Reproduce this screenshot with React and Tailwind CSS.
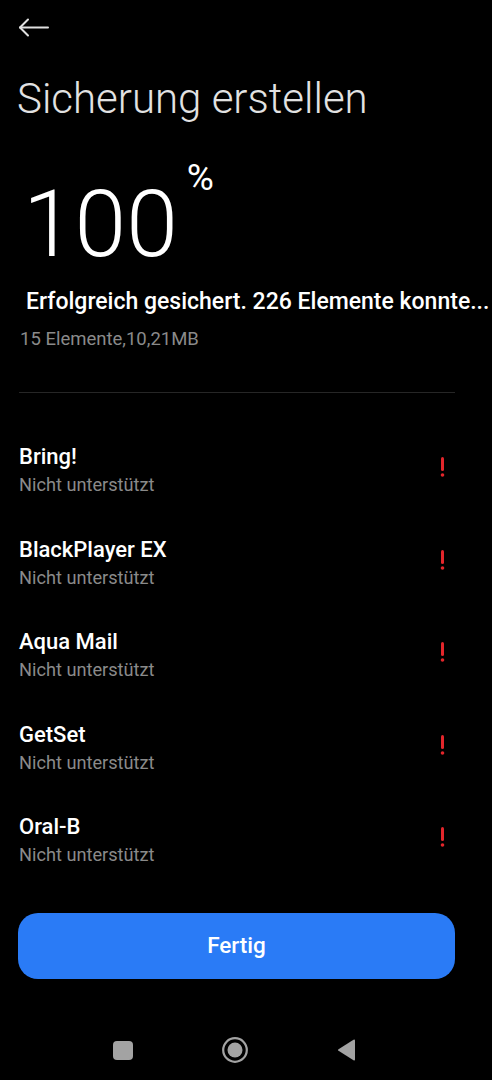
import React from 'react';

const apps = ['Bring!', 'BlackPlayer EX', 'Aqua Mail', 'GetSet', 'Oral-B'];

function Warn() {
    return (
        <svg width="5" height="22" viewBox="0 0 5 22" className="mr-[10px] mt-[13px] shrink-0">
            <rect x="1" y="1" width="3" height="14" rx="1.5" fill="#e3262b" />
            <circle cx="2.5" cy="19" r="1.8" fill="#e3262b" />
        </svg>
    );
}

export default function App() {
    return (
        <div className="w-[492px] h-[1080px] bg-black overflow-hidden font-['Roboto',sans-serif]">
            {/* back */}
            <div className="pt-[18px] pl-[18px]">
                <svg width="31" height="19" viewBox="0 0 31 19" fill="none" stroke="#e0e0e0" strokeWidth="2" strokeLinecap="round" strokeLinejoin="round">
                    <path d="M30 9.5H2" />
                    <path d="M10 1.5L2 9.5L10 17.5" />
                </svg>
            </div>

            <h1 className="mt-[41px] pl-[17px] text-[42px] leading-[42px] font-light text-[#e2e2e2]">
                Sicherung erstellen
            </h1>

            <div className="mt-[56px] pl-[23px] flex items-start text-white">
                <span className="text-[93px] leading-[98px] font-light">100</span>
                <span className="ml-[9px] mt-[-17px] text-[37px] leading-[38px] font-normal">%</span>
            </div>

            <p className="mt-[14px] pl-[26px] pr-[3px] text-[23px] leading-[28px] font-medium text-white whitespace-nowrap">
                Erfolgreich gesichert. 226 Elemente konnte...
            </p>
            <p className="mt-[11px] pl-[20px] text-[18.5px] leading-[24px] text-[#8a8a8a]">
                15 Elemente,10,21MB
            </p>

            <div className="mt-[41px] ml-[19px] w-[436px] h-px bg-[#262626]" />

            <div className="mt-[50px] flex flex-col gap-[38.5px] pl-[19px] pr-[37px]">
                {apps.map((name) => (
                    <div key={name} className="flex justify-between items-start">
                        <div>
                            <div className="text-[22px] leading-[28px] font-medium text-white">{name}</div>
                            <div className="mt-[2px] text-[18.2px] leading-[24px] text-[#8a8a8a]">Nicht unterstützt</div>
                        </div>
                        <Warn />
                    </div>
                ))}
            </div>

            <div className="mt-[46px] px-[18px] pr-[37px]">
                <button className="w-full h-[66px] rounded-[20px] bg-[#2a7bf6] text-white text-[22.5px] font-medium">
                    Fertig
                </button>
            </div>

            {/* nav bar */}
            <div className="mt-[58px] pl-[113px] flex items-center gap-[89px]">
                <div className="w-[20px] h-[19px] rounded-[4px] bg-[#a3a3a3]" />
                <svg width="26" height="26" viewBox="0 0 26 26">
                    <circle cx="13" cy="13" r="11.8" fill="none" stroke="#a3a3a3" strokeWidth="2.2" />
                    <circle cx="13" cy="13" r="7.5" fill="#a3a3a3" />
                </svg>
                <svg width="19" height="22" viewBox="0 0 19 22">
                    <path d="M18 1.5V20.5a1 1 0 0 1-1.5.8L1.5 11.8a1 1 0 0 1 0-1.6L16.5 .7A1 1 0 0 1 18 1.5z" fill="#a3a3a3" />
                </svg>
            </div>
        </div>
    );
}
